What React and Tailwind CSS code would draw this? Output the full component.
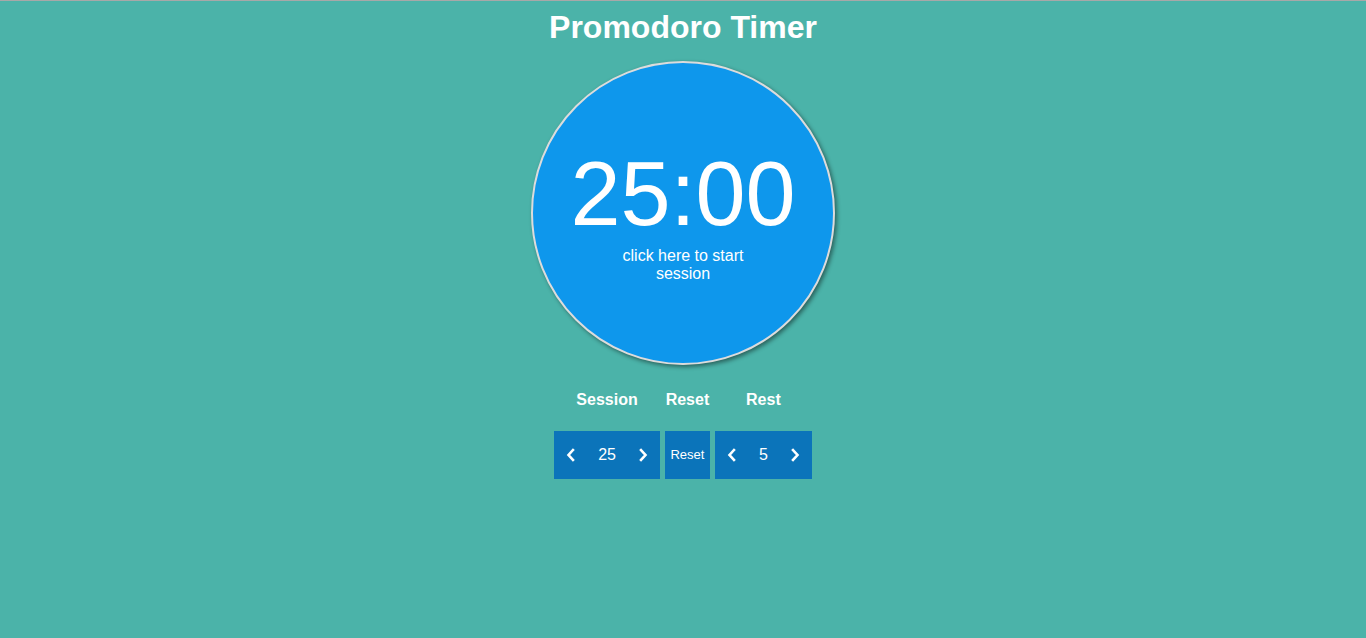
import React from "react";

function Chev({ dir }) {
  return (
    <svg width="10" height="14" viewBox="0 0 10 14" className="block">
      {dir === "left" ? (
        <polyline points="7,2 2.5,7 7,12" fill="none" stroke="white" strokeWidth="2.6" strokeLinecap="square" />
      ) : (
        <polyline points="3,2 7.5,7 3,12" fill="none" stroke="white" strokeWidth="2.6" strokeLinecap="square" />
      )}
    </svg>
  );
}

function Stepper({ value }) {
  return (
    <div className="flex h-[48px] items-center bg-[#0b74ba] text-white">
      <button className="flex h-full w-[34px] items-center justify-center">
        <Chev dir="left" />
      </button>
      <span className="px-[10px] text-[16px]">{value}</span>
      <button className="flex h-full w-[34px] items-center justify-center">
        <Chev dir="right" />
      </button>
    </div>
  );
}

export default function App() {
  return (
    <div
      className="min-h-[638px] border-t border-[#a8a8a8] bg-[#4bb3a9] text-white"
      style={{ fontFamily: '"Liberation Sans", Arial, sans-serif' }}
    >
      <h1 className="pt-[10px] text-center text-[32px] font-bold leading-none">Promodoro Timer</h1>
      <div className="mt-[18px] flex justify-center">
        <div className="flex h-[304px] w-[304px] flex-col items-center rounded-full border-2 border-[#dcdcdc] bg-[#0e97ec] pt-[86px] shadow-[2px_2px_4px_rgba(0,0,0,0.45)]">
          <div className="text-[90px] leading-none">25:00</div>
          <div className="mt-[8px] w-[130px] text-center text-[16px] leading-[18px]">click here to start session</div>
        </div>
      </div>
      <div className="mt-[27px] flex justify-center gap-[5px]">
        <div className="flex flex-col items-center">
          <div className="text-[16px] font-bold leading-none">Session</div>
          <div className="mt-[23px]">
            <Stepper value="25" />
          </div>
        </div>
        <div className="flex flex-col items-center">
          <div className="text-[16px] font-bold leading-none">Reset</div>
          <button className="mt-[23px] flex h-[48px] w-[45px] items-center justify-center bg-[#0b74ba] text-[13px] text-white">
            Reset
          </button>
        </div>
        <div className="flex flex-col items-center">
          <div className="text-[16px] font-bold leading-none">Rest</div>
          <div className="mt-[23px]">
            <Stepper value="5" />
          </div>
        </div>
      </div>
    </div>
  );
}
